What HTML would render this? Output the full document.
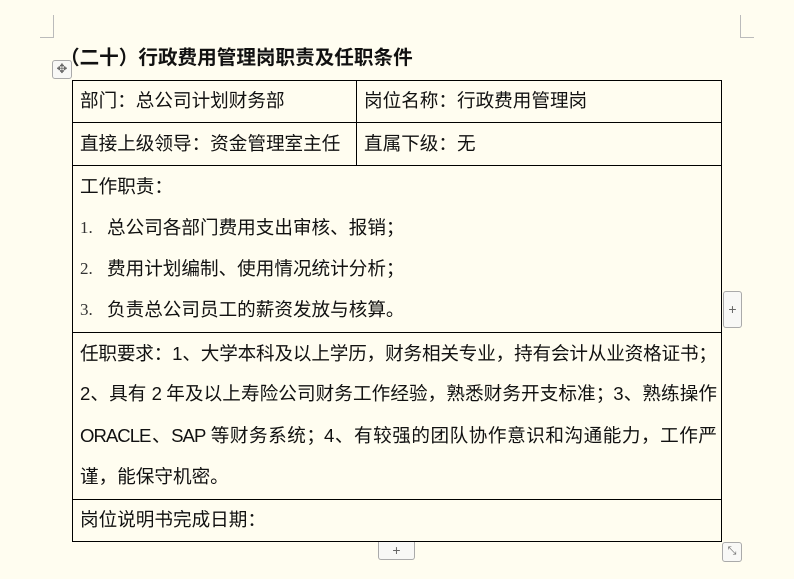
<!DOCTYPE html>
<html><head><meta charset="utf-8"><style>
body{margin:0;width:794px;height:579px;background:#fffdf0;position:relative;overflow:hidden;font-family:"Liberation Sans","Noto Sans CJK SC",sans-serif;color:#111;}
.a{position:absolute;white-space:nowrap;font-size:18.6px;line-height:20px;}
.l{position:absolute;background:#000;}
.g{position:absolute;background:#bbb;}
.j{text-align:justify;text-align-last:justify;white-space:normal;letter-spacing:-1px;height:20px;overflow:visible;}
.n{font-family:"Liberation Serif",serif;color:#333;font-size:17px;}
.btn{position:absolute;border:1px solid #aaa;border-radius:3px;background:#f8f8f6;color:#666;font-size:14px;text-align:center;}
</style></head><body>
<div class="g" style="left:40px;top:37px;width:13px;height:1px"></div>
<div class="g" style="left:53px;top:15px;width:1px;height:23px"></div>
<div class="g" style="left:741px;top:37px;width:13px;height:1px"></div>
<div class="g" style="left:740px;top:15px;width:1px;height:23px"></div>
<div class="a" style="left:60px;top:48px;font-size:19.6px;font-weight:bold;">（二十）行政费用管理岗职责及任职条件</div>
<div class="btn" style="left:52px;top:60px;width:18px;height:17px;line-height:16px;font-size:13px;">✥</div>
<div class="l" style="left:72px;top:80px;width:650px;height:1px"></div>
<div class="l" style="left:72px;top:122px;width:650px;height:1px"></div>
<div class="l" style="left:72px;top:165px;width:650px;height:1px"></div>
<div class="l" style="left:72px;top:332px;width:650px;height:1px"></div>
<div class="l" style="left:72px;top:499px;width:650px;height:1px"></div>
<div class="l" style="left:72px;top:541px;width:650px;height:1px"></div>
<div class="l" style="left:72px;top:80px;width:1px;height:462px"></div>
<div class="l" style="left:721px;top:80px;width:1px;height:462px"></div>
<div class="l" style="left:356px;top:80px;width:1px;height:86px"></div>
<div class="a" style="left:80px;top:91px">部门：总公司计划财务部</div>
<div class="a" style="left:364px;top:91px">岗位名称：行政费用管理岗</div>
<div class="a" style="left:80px;top:134px">直接上级领导：资金管理室主任</div>
<div class="a" style="left:364px;top:134px">直属下级：无</div>
<div class="a" style="left:80px;top:177px">工作职责：</div>
<div class="a n" style="left:80px;top:218px">1.</div><div class="a" style="left:107px;top:218px">总公司各部门费用支出审核、报销；</div>
<div class="a n" style="left:80px;top:259px">2.</div><div class="a" style="left:107px;top:259px">费用计划编制、使用情况统计分析；</div>
<div class="a n" style="left:80px;top:300px">3.</div><div class="a" style="left:107px;top:300px">负责总公司员工的薪资发放与核算。</div>
<div class="a j" style="left:80px;top:344px;width:636px">任职要求：1、大学本科及以上学历，财务相关专业，持有会计从业资格证书；</div>
<div class="a j" style="left:80px;top:384px;width:636px">2、具有 2 年及以上寿险公司财务工作经验，熟悉财务开支标准；3、熟练操作</div>
<div class="a j" style="left:80px;top:426px;width:636px">ORACLE、SAP 等财务系统；4、有较强的团队协作意识和沟通能力，工作严</div>
<div class="a" style="left:80px;top:467px">谨，能保守机密。</div>
<div class="a" style="left:80px;top:510px">岗位说明书完成日期：</div>
<div class="btn" style="left:723px;top:291px;width:17px;height:35px;line-height:35px;">+</div>
<div class="btn" style="left:378px;top:542px;width:35px;height:17px;line-height:16px;border-top:none;border-radius:0 0 3px 3px;">+</div>
<div class="btn" style="left:722px;top:542px;width:18px;height:18px;line-height:17px;font-size:11px;">⤡</div>
</body></html>
